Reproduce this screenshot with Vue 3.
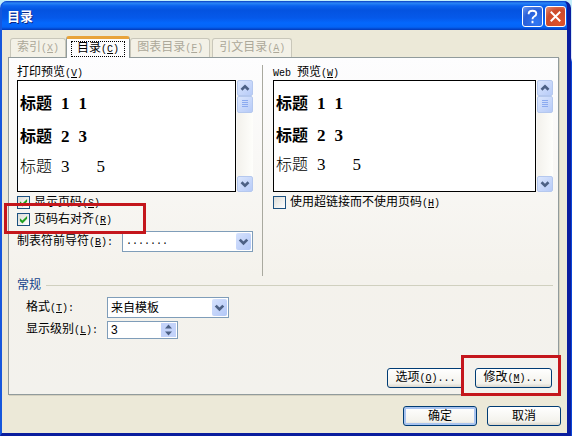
<script setup>
import { ref } from 'vue'

const tabs = [
  { text: '索引', key: 'X' },
  { text: '目录', key: 'C', active: true },
  { text: '图表目录', key: 'F' },
  { text: '引文目录', key: 'A' },
]
const previews = [
  { id: 'print', lead: '', text: '打印预览', key: 'V' },
  { id: 'web', lead: 'Web ', text: '预览', key: 'W' },
]
const headings = [
  { level: 1, page: 1 },
  { level: 2, page: 3 },
  { level: 3, page: 5 },
]
const showNumbers = ref(true)
const alignRight = ref(true)
const useLinks = ref(false)
const levels = ref(3)
</script>

<template>
  <main class="desktop">
    <section class="dialog" role="dialog" aria-labelledby="title">
      <header class="titlebar">
        <h1 id="title">目录</h1>
        <button class="cap help" aria-label="帮助">
          <svg viewBox="0 0 20 20"><path d="M6 7.5V6.5Q6.5 4 10 4Q14 4 14 7Q14 8.8 11.8 10Q10 11 10 13M10 14.5V17" /></svg>
        </button>
        <button class="cap close" aria-label="关闭">
          <svg viewBox="0 0 20 20"><path d="M5 5L15 15M15 5L5 15" /></svg>
        </button>
      </header>

      <div class="body">
        <nav class="tabs" role="tablist">
          <button v-for="t in tabs" :key="t.key" class="tab" :class="{ active: t.active }" role="tab" :aria-selected="!!t.active" :disabled="!t.active">
            <span class="tabtext">{{ t.text }}<span class="lat">(<u>{{ t.key }}</u>)</span></span>
          </button>
        </nav>

        <div class="panel" role="tabpanel">
          <div class="columns">
            <div v-for="p in previews" :key="p.id" class="column" :class="p.id">
              <p class="caption"><span v-if="p.lead" class="lat">{{ p.lead }}</span>{{ p.text }}<span class="lat">(<u>{{ p.key }}</u>)</span></p>
              <div class="preview">
                <div class="sheet">
                  <p v-for="h in headings" :key="h.level" :class="'h' + h.level">标题 <span class="num">{{ h.level }}</span> <span class="num page">{{ h.page }}</span></p>
                </div>
                <div class="scroll">
                  <button class="sb" aria-label="向上"><svg viewBox="0 0 16 16"><path d="M4 10L8 6L12 10" /></svg></button>
                  <div class="sb thumb"><svg viewBox="0 0 14 14"><path d="M4 3.5H10M4 5.5H10M4 7.5H10M4 9.5H10" /></svg></div>
                  <button class="sb down" aria-label="向下"><svg viewBox="0 0 16 16"><path d="M4 6L8 10L12 6" /></svg></button>
                </div>
              </div>
              <template v-if="p.id === 'print'">
                <label class="check"><input v-model="showNumbers" type="checkbox"><span>显示页码<span class="lat">(<u>S</u>)</span></span></label>
                <div class="marked">
                  <label class="check"><input v-model="alignRight" type="checkbox"><span>页码右对齐<span class="lat">(<u>R</u>)</span></span></label>
                  <i class="mark mark-check"></i>
                </div>
                <div class="leader">
                  <label for="leader">制表符前导符<span class="lat">(<u>B</u>):</span></label>
                  <div class="combo">
                    <select id="leader" class="dots"><option>.......</option></select>
                    <span class="arrow"><svg viewBox="0 0 16 18"><path d="M4 7L8 11L12 7" /></svg></span>
                  </div>
                </div>
              </template>
              <label v-else class="check"><input v-model="useLinks" type="checkbox"><span>使用超链接而不使用页码<span class="lat">(<u>H</u>)</span></span></label>
            </div>
          </div>

          <h2 class="group">常规</h2>
          <div class="fields">
            <label for="format">格式<span class="lat">(<u>T</u>):</span></label>
            <div class="combo format">
              <select id="format"><option>来自模板</option></select>
              <span class="arrow"><svg viewBox="0 0 16 18"><path d="M4 7L8 11L12 7" /></svg></span>
            </div>
            <label for="levels">显示级别<span class="lat">(<u>L</u>):</span></label>
            <div class="spin">
              <input id="levels" v-model="levels" type="number" min="1" max="9">
              <span class="steps">
                <button aria-label="增加" @click="levels++"><svg viewBox="0 0 14 7"><path d="M3.5 5.5L7 1.5L10.5 5.5Z" /></svg></button>
                <button aria-label="减少" @click="levels--"><svg viewBox="0 0 14 7"><path d="M3.5 1.5L7 5.5L10.5 1.5Z" /></svg></button>
              </span>
            </div>
          </div>

          <div class="actions">
            <button class="btn">选项<span class="lat">(<u>O</u>)...</span></button>
            <div class="marked">
              <button class="btn">修改<span class="lat">(<u>M</u>)...</span></button>
              <i class="mark mark-modify"></i>
            </div>
          </div>
        </div>

        <footer class="footer">
          <button class="btn default">确定</button>
          <button class="btn">取消</button>
        </footer>
      </div>
    </section>
  </main>
</template>

<style>
body { background: linear-gradient(#c3effb 0, #dfe4fa 58px, #0a46d8 62px); }
</style>

<style scoped>
* { box-sizing: border-box; }
.desktop {
  padding: 1px 1px 0 0;
  font: 12px/16px "Liberation Sans", "Noto Sans CJK SC", sans-serif;
  color: #000;
}
p, h1, h2 { margin: 0; font-weight: normal; }
button, select, input { font: inherit; color: inherit; margin: 0; padding: 0; }
svg { display: block; fill: none; }
.lat { font-family: "Liberation Mono", monospace; font-size: 10px; white-space: pre; }
u { text-underline-offset: 1px; }
.dialog {
  border: solid #0a1d9e;
  border-width: 0 4px 3px 2px;
  border-left-color: #1657dc;
  border-radius: 7px 7px 0 0;
  background: #0a4fe0;
}
.titlebar {
  display: flex;
  align-items: center;
  gap: 2px;
  height: 29px;
  padding: 2px 1px 0 5px;
  border-radius: 6px 6px 0 0;
  background: linear-gradient(#0a3cc0 0, #2a86f6 2px, #0b62ee 5px, #0453e0 9px, #0559ea 17px, #0468fd 22px, #0464f6 26px, #0339b8 29px);
}
.titlebar h1 {
  flex: 1;
  font-size: 13px;
  font-weight: bold;
  color: #fff;
  text-shadow: 1px 1px #0a2a88;
}
.cap {
  width: 21px;
  height: 21px;
  border: 1px solid #fff;
  border-radius: 3px;
}
.cap svg { width: 19px; height: 19px; stroke: #fff; stroke-width: 2; }
.help { background: radial-gradient(circle at 70% 80%, #2f78f5, #2a5fd8 60%, #6f9cf0); }
.close { background: radial-gradient(circle at 70% 80%, #e0532a, #cc4a2b 60%, #e69078); }
.body { padding: 6px 8px 7px 6px; background: #ece9d8; }
.tabs { display: flex; align-items: flex-end; padding-left: 2px; }
.tab {
  height: 19px;
  padding: 0 6px;
  border: 1px solid #c9c7ba;
  border-bottom: 0;
  border-radius: 3px 3px 0 0;
  background: #f3f1e7;
  color: #aca899;
  white-space: nowrap;
}
.tab:last-child { margin-left: 2px; }
.tab.active {
  position: relative;
  height: 22px;
  margin-bottom: -1px;
  padding: 0 4px;
  border-color: #919b9c;
  border-top: 3px solid #e8a33a;
  background: #fdfdfe;
  color: #000;
}
.tabtext { display: block; line-height: 17px; }
.active .tabtext { height: 16px; padding: 0 5px; border: 1px dotted #000; line-height: 13px; }
.panel {
  border: 1px solid #919b9c;
  background: linear-gradient(#fdfdfe, #f4f2ec 65%, #f3f2ed);
  padding: 7px 5px 6px 8px;
  box-shadow: 1px 1px #d5d1bf;
}
.columns { display: grid; grid-template-columns: 246px 1fr; }
.column.print { padding: 0 9px 24px 0; border-right: 1px solid #a9a99f; }
.column.web { padding-left: 10px; }
.caption { height: 15px; line-height: 14px; }
.preview { display: flex; gap: 1px; height: 112px; margin-bottom: 2px; }
.sheet { flex: 1; border: 1px solid #000; background: #fff; padding: 7px 2px; font-size: 16px; }
.sheet p { display: flex; gap: 9px; height: 33px; line-height: 32px; }
.web .sheet p { height: 32px; }
.sheet .h3 { line-height: 26px; font-weight: 300; }
.sheet .h1, .sheet .h2 { font-weight: bold; }
.num { font-family: "Liberation Serif", serif; font-size: 17px; }
.h3 .page { margin-left: 18px; }
.scroll { display: flex; flex-direction: column; width: 16px; background: linear-gradient(90deg, #f3f1ec, #fefefb); }
.sb {
  height: 16px;
  border: 1px solid #b5c8ee;
  border-radius: 2px;
  background: linear-gradient(135deg, #dbe6fd, #b7cbf8);
}
.sb svg { width: 14px; height: 14px; stroke: #4d6185; stroke-width: 3; }
.sb.thumb { height: 17px; }
.sb.thumb svg { stroke: #8caaf0; stroke-width: 1; }
.sb.down { margin-top: auto; }
.check { display: flex; align-items: center; gap: 4px; height: 17px; width: max-content; }
.check input {
  appearance: none;
  display: grid;
  place-items: center;
  width: 13px;
  height: 13px;
  border: 1px solid #1c5180;
  background: linear-gradient(135deg, #dcdcd7, #fff);
}
.check input:checked::before {
  content: "";
  width: 9px;
  height: 9px;
  background: #21a121;
  clip-path: polygon(10% 35%, 38% 62%, 90% 10%, 90% 42%, 38% 95%, 10% 68%);
}
.marked { position: relative; z-index: 1; width: max-content; }
.mark { position: absolute; border: 3px solid #c4161c; pointer-events: none; }
.mark-check { left: -13px; top: -8px; width: 142px; height: 31px; }
.mark-modify { inset: -13px -9px -8px -14px; }
.leader { display: grid; grid-template-columns: 105px 1fr; align-items: center; margin-top: 3px; }
.combo { position: relative; height: 21px; }
.combo select {
  appearance: none;
  width: 100%;
  height: 100%;
  padding: 0 20px 0 3px;
  border: 1px solid #7f9db9;
  border-radius: 0;
  background: #fff;
}
.combo .dots { font-family: "Liberation Mono", monospace; font-size: 10px; }
.arrow {
  position: absolute;
  inset: 2px 2px 2px auto;
  width: 15px;
  border-radius: 2px;
  background: linear-gradient(135deg, #d6e2fd, #b2c7f7);
  pointer-events: none;
}
.arrow svg { width: 15px; height: 17px; stroke: #4d6185; stroke-width: 3; }
.group {
  display: flex;
  align-items: center;
  gap: 5px;
  height: 16px;
  margin-top: 1px;
  font-size: 12px;
  color: #15428b;
}
.group::after { content: ""; flex: 1; height: 1px; background: #d0d0bf; }
.fields {
  display: grid;
  grid-template-columns: 81px max-content;
  align-items: center;
  gap: 3px 0;
  padding: 4px 0 0 9px;
}
.format { width: 122px; }
.spin { display: flex; width: 71px; height: 18px; border: 1px solid #7f9db9; background: #fff; padding: 1px; }
.spin input {
  flex: 1;
  min-width: 0;
  padding-left: 2px;
  border: 0;
  background: none;
  appearance: textfield;
}
.spin input::-webkit-inner-spin-button { appearance: none; }
.steps { display: grid; width: 15px; }
.steps button { border: 0; background: #c3d3fa; }
.steps svg { width: 15px; height: 7px; fill: #4d6185; }
.actions { display: flex; justify-content: flex-end; gap: 11px; padding: 29px 1px 0 0; }
.btn {
  display: block;
  width: 77px;
  height: 20px;
  border: 1px solid #003c74;
  border-radius: 3px;
  background: linear-gradient(#fff, #f3f2ec 80%, #dbd6cc);
  line-height: 16px;
  white-space: nowrap;
}
.footer { display: flex; justify-content: flex-end; gap: 10px; padding-top: 11px; margin-right: -2px; }
.footer .btn { width: 74px; }
.btn.default { box-shadow: inset 0 0 0 2px #a9c4f0; }
</style>
